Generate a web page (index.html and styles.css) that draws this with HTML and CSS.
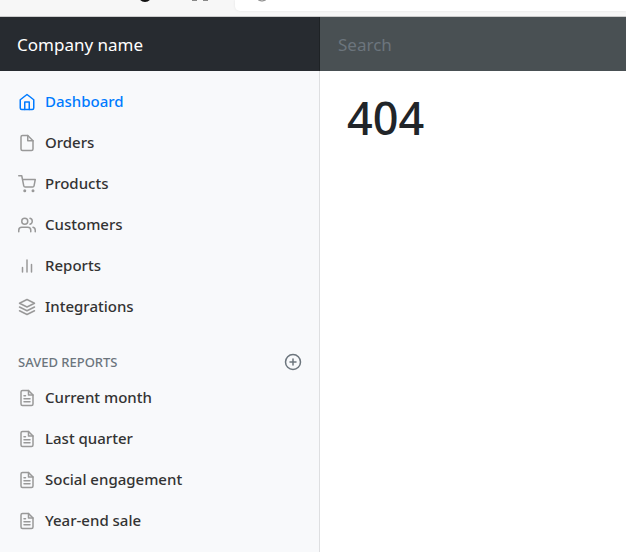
FILE: index.html
```html
<!DOCTYPE html>
<html lang="en">
<head>
<meta charset="utf-8">
<meta name="viewport" content="width=device-width, initial-scale=1">
<title>Dashboard</title>
<link rel="stylesheet" href="styles.css">
</head>
<body>
<svg class="sprite" aria-hidden="true">
  <symbol id="file-text" viewBox="0 0 24 24"><path d="M14 2H6a2 2 0 0 0-2 2v16a2 2 0 0 0 2 2h12a2 2 0 0 0 2-2V8z"/><path d="M14 2v6h6M16 13H8M16 17H8M10 9H8"/></symbol>
</svg>
<div class="browser-bar">
  <svg class="browser-icons" viewBox="0 0 100 16" aria-hidden="true">
    <circle cx="15" cy="-5" r="6"/>
    <path class="soft" d="M62 0h5M73 0h5"/>
  </svg>
  <div class="address">
    <svg class="address-icon" viewBox="0 0 20 11" aria-hidden="true"><circle cx="10" cy="-6" r="7"/></svg>
  </div>
</div>
<header class="topbar">
  <a class="brand" href="#">Company name</a>
  <input class="search" type="text" placeholder="Search" aria-label="Search">
</header>
<div class="layout">
  <nav class="sidebar">
    <ul class="menu">
      <li><a class="link active" href="#"><svg class="icon" viewBox="0 0 24 24"><path d="M3 9l9-7 9 7v11a2 2 0 0 1-2 2H5a2 2 0 0 1-2-2z"/><path d="M9 22V12h6v10"/></svg>Dashboard</a></li>
      <li><a class="link" href="#"><svg class="icon" viewBox="0 0 24 24"><path d="M13 2H6a2 2 0 0 0-2 2v16a2 2 0 0 0 2 2h12a2 2 0 0 0 2-2V9z"/><path d="M13 2v7h7"/></svg>Orders</a></li>
      <li><a class="link" href="#"><svg class="icon" viewBox="0 0 24 24"><circle cx="9" cy="21" r="1"/><circle cx="20" cy="21" r="1"/><path d="M1 1h4l2.68 13.39a2 2 0 0 0 2 1.61h9.72a2 2 0 0 0 2-1.61L23 6H6"/></svg>Products</a></li>
      <li><a class="link" href="#"><svg class="icon" viewBox="0 0 24 24"><path d="M17 21v-2a4 4 0 0 0-4-4H5a4 4 0 0 0-4 4v2"/><circle cx="9" cy="7" r="4"/><path d="M23 21v-2a4 4 0 0 0-3-3.87M16 3.13a4 4 0 0 1 0 7.75"/></svg>Customers</a></li>
      <li><a class="link" href="#"><svg class="icon" viewBox="0 0 24 24"><path d="M18 20V10M12 20V4M6 20v-6"/></svg>Reports</a></li>
      <li><a class="link" href="#"><svg class="icon" viewBox="0 0 24 24"><path d="M12 2L2 7l10 5 10-5zM2 17l10 5 10-5M2 12l10 5 10-5"/></svg>Integrations</a></li>
    </ul>
    <div class="heading">
      <h2 class="heading-text">Saved reports</h2>
      <a class="add" href="#" aria-label="Add a new report"><svg class="icon" viewBox="0 0 24 24"><circle cx="12" cy="12" r="10"/><path d="M12 8v8M8 12h8"/></svg></a>
    </div>
    <ul class="menu">
      <li><a class="link" href="#"><svg class="icon"><use href="#file-text"/></svg>Current month</a></li>
      <li><a class="link" href="#"><svg class="icon"><use href="#file-text"/></svg>Last quarter</a></li>
      <li><a class="link" href="#"><svg class="icon"><use href="#file-text"/></svg>Social engagement</a></li>
      <li><a class="link" href="#"><svg class="icon"><use href="#file-text"/></svg>Year-end sale</a></li>
    </ul>
  </nav>
  <main class="content">
    <h1 class="title">404</h1>
  </main>
</div>
</body>
</html>
```
FILE: styles.css
```css
* {
  box-sizing: border-box;
}

body {
  display: flex;
  flex-direction: column;
  min-height: 100vh;
  margin: 0;
  background: #fff;
  color: #212529;
  font-family: "Segoe UI", "Noto Sans", sans-serif;
}

.sprite {
  position: absolute;
  width: 0;
  height: 0;
}

.browser-bar {
  display: flex;
  align-items: flex-start;
  height: 17px;
  padding-left: 130px;
  background: #f7f7f7;
  border-bottom: 1px solid #ccc;
}

.browser-icons {
  flex: none;
  width: 100px;
  height: 16px;
  fill: none;
  stroke: #111;
  stroke-width: 2;
}

.soft {
  stroke: #888;
}

.address {
  flex: 1;
  height: 11px;
  margin-left: 5px;
  padding-left: 17px;
  background: #fff;
  border-bottom-left-radius: 5px;
  box-shadow: 0 0 3px rgba(0, 0, 0, 0.08);
}

.address-icon {
  display: block;
  width: 20px;
  height: 11px;
  fill: none;
  stroke: #777;
  stroke-width: 1;
}

.topbar {
  display: flex;
  height: 54px;
  background: #343a40;
}

.brand {
  flex: none;
  width: 320px;
  padding: 0 17px;
  background: #272b30;
  box-shadow: inset -1px 0 0 #1e2225;
  color: #fff;
  font-size: 17px;
  line-height: 55px;
  text-decoration: none;
}

.search {
  flex: 1;
  min-width: 0;
  padding: 1px 18px 0;
  border: 0;
  border-radius: 0;
  outline: 0;
  background: #495053;
  color: #fff;
  font-family: inherit;
  font-size: 17px;
}

.search::placeholder {
  color: #6c757d;
  opacity: 1;
}

.layout {
  display: flex;
  flex: 1;
}

.sidebar {
  flex: none;
  width: 320px;
  padding-top: 9px;
  background: #f8f9fb;
  border-right: 1px solid #dedfe1;
}

.menu {
  margin: 0;
  padding: 0;
  list-style: none;
}

.link {
  display: flex;
  align-items: center;
  gap: 9px;
  height: 41px;
  padding: 0 18px;
  color: #333;
  font-size: 15px;
  font-weight: 500;
  text-decoration: none;
}

.icon {
  flex: none;
  width: 18px;
  height: 18px;
  fill: none;
  stroke: #999;
  stroke-width: 2;
  stroke-linecap: round;
  stroke-linejoin: round;
}

.link .icon {
  margin-top: 2px;
}

.active {
  color: #007bff;
}

.active .icon {
  stroke: currentColor;
}

.heading {
  display: flex;
  align-items: center;
  justify-content: space-between;
  height: 20px;
  margin: 26px 0 4px;
  padding: 0 17px 0 18px;
  color: #6c757d;
}

.heading-text {
  margin: 0;
  font-size: 13px;
  font-weight: 500;
  line-height: 20px;
  text-transform: uppercase;
}

.add {
  display: flex;
  color: inherit;
}

.add .icon {
  stroke: currentColor;
}

.content {
  flex: 1;
  padding: 19px 27px;
}

.title {
  margin: 0;
  font-size: 45px;
  font-weight: 500;
  line-height: 56px;
}
```
